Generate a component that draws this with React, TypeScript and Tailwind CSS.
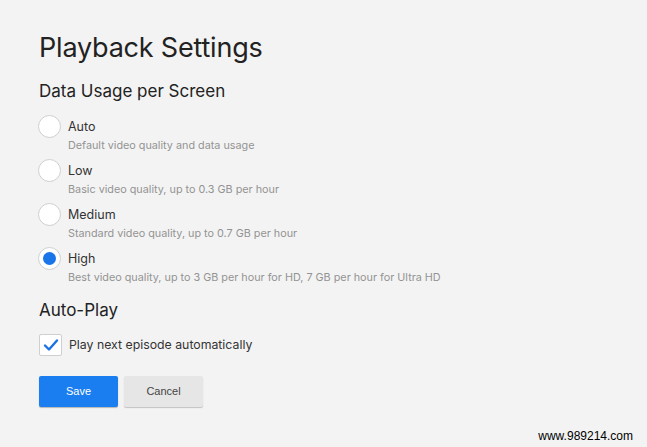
import React from "react";

const options = [
  { label: "Auto", desc: "Default video quality and data usage", checked: false },
  { label: "Low", desc: "Basic video quality, up to 0.3 GB per hour", checked: false },
  { label: "Medium", desc: "Standard video quality, up to 0.7 GB per hour", checked: false },
  {
    label: "High",
    desc: "Best video quality, up to 3 GB per hour for HD, 7 GB per hour for Ultra HD",
    checked: true,
  },
];

function Radio({ checked }: { checked: boolean }) {
  return (
    <div className="w-[23px] h-[23px] rounded-full bg-white border border-[#cfcfcf] flex items-center justify-center shrink-0">
      {checked && <div className="w-[13px] h-[13px] rounded-full bg-[#1a75e8]" />}
    </div>
  );
}

export default function App() {
  return (
    <div
      className="w-[647px] h-[447px] bg-[#f3f3f3] relative overflow-hidden text-[#222]"
      style={{ fontFamily: "Inter, 'Noto Sans', sans-serif" }}
    >
      <div className="pl-[39px] pt-[32px] flex flex-col">
        <h1 className="text-[27px] leading-[31px] font-normal tracking-[-0.2px]">Playback Settings</h1>
        <h2 className="mt-[17px] text-[17px] leading-[22px] font-normal">Data Usage per Screen</h2>

        <div className="mt-[13px] flex flex-col gap-[7px] -ml-[1px]">
          {options.map((o) => (
            <div key={o.label} className="flex flex-col">
              <div className="flex items-center gap-[7px]">
                <Radio checked={o.checked} />
                <span className="text-[12.5px] leading-[16px] text-[#333]">{o.label}</span>
              </div>
              <div className="pl-[30px] mt-[1px] text-[10.8px] leading-[13px] text-[#939393]">{o.desc}</div>
            </div>
          ))}
        </div>

        <h2 className="mt-[15px] text-[17px] leading-[22px] font-normal">Auto-Play</h2>

        <div className="mt-[13px] flex items-center gap-[7px]">
          <div className="w-[23px] h-[22px] bg-white border border-[#cfcfcf] rounded-[2px] flex items-center justify-center">
            <svg width="16" height="14" viewBox="0 0 16 14">
              <path d="M2 7.5 L6 11.5 L14 2.5" fill="none" stroke="#1a72e4" strokeWidth="2.4" strokeLinecap="round" strokeLinejoin="round" />
            </svg>
          </div>
          <span className="text-[12.3px] leading-[16px] text-[#333]">Play next episode automatically</span>
        </div>

        <div className="mt-[20px] flex gap-[6px]" style={{ fontFamily: "'Liberation Sans', Arial, sans-serif" }}>
          <button className="w-[79px] h-[31px] bg-[#1a7ef0] text-white text-[11px] rounded-[2px] shadow-[0_1px_1px_rgba(0,0,0,0.25)]">
            Save
          </button>
          <button className="w-[79px] h-[31px] bg-[#e6e6e6] text-[#444] text-[11px] rounded-[2px] shadow-[0_1px_1px_rgba(0,0,0,0.2)]">
            Cancel
          </button>
        </div>
      </div>

      <div
        className="absolute right-[14px] bottom-[4px] text-[12px] leading-[14px] text-black"
        style={{ fontFamily: "'Liberation Sans', Arial, sans-serif" }}
      >
        www.989214.com
      </div>
    </div>
  );
}
